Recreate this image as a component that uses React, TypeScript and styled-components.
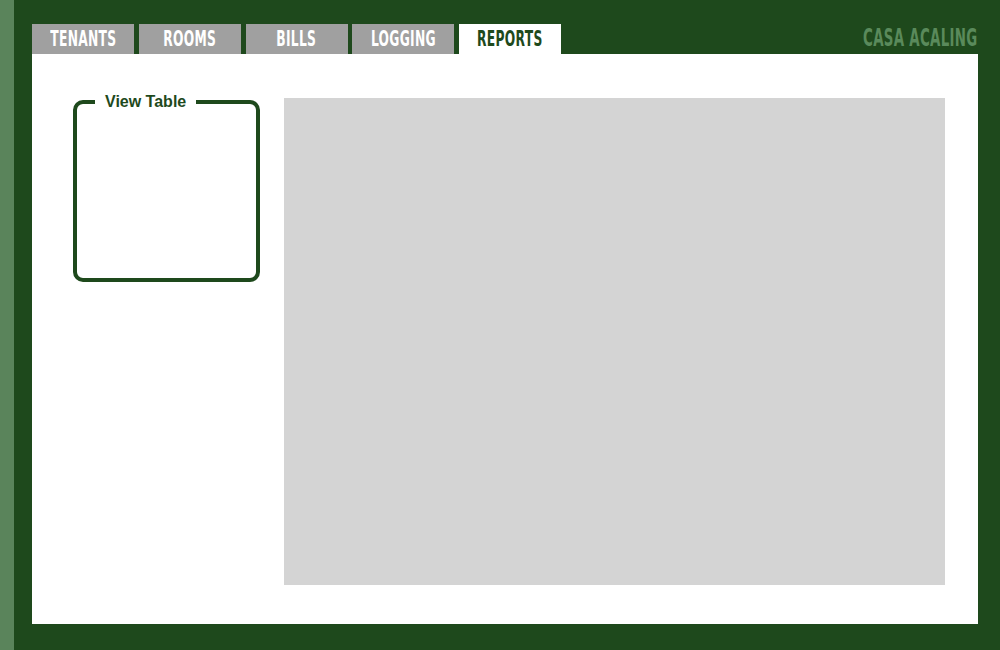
import React from "react";
import styled, { createGlobalStyle } from "styled-components";

const GlobalStyle = createGlobalStyle`
  html, body { margin: 0; padding: 0; }
  body { background: #1e491c; font-family: "Liberation Sans", Arial, sans-serif; }
`;

const Page = styled.div`
  display: flex;
  width: 1000px;
  height: 650px;
  overflow: hidden;
`;

const SideStrip = styled.div`
  width: 14px;
  flex: none;
  background: #5a845b;
`;

const Main = styled.div`
  flex: 1;
  display: flex;
  flex-direction: column;
  background: #1e491c;
  padding: 0 22px 26px 18px;
`;

const Header = styled.header`
  display: flex;
  justify-content: space-between;
  align-items: flex-start;
  height: 54px;
  padding-top: 24px;
  box-sizing: border-box;
`;

const Tabs = styled.nav`
  display: flex;
  gap: 4.75px;
`;

const Tab = styled.div<{ $active?: boolean }>`
  width: 102px;
  height: 30px;
  display: flex;
  align-items: center;
  justify-content: center;
  background: ${(p) => (p.$active ? "#ffffff" : "#a0a0a0")};
  color: ${(p) => (p.$active ? "#1e491c" : "#ffffff")};
  cursor: pointer;
`;

const CondensedLabel = styled.span<{ $size: number; $scale: number }>`
  display: inline-block;
  font-family: "DejaVu Sans Condensed", "DejaVu Sans", sans-serif;
  font-stretch: condensed;
  font-weight: bold;
  font-size: ${(p) => p.$size}px;
  line-height: 1;
  white-space: nowrap;
  transform: scaleX(${(p) => p.$scale});
  letter-spacing: 0.5px;
`;

const Brand = styled.div`
  color: #5a8a5b;
  margin-top: 1px;
  display: flex;
  justify-content: flex-end;
  width: 160px;
`;

const BrandLabel = styled(CondensedLabel)`
  transform-origin: right center;
`;

const Panel = styled.section`
  flex: 1;
  background: #ffffff;
  display: flex;
  align-items: flex-start;
  gap: 24px;
  padding: 39px 33px 39px 41px;
`;

const Fieldset = styled.fieldset`
  box-sizing: border-box;
  width: 187px;
  height: 189px;
  margin: 0;
  min-inline-size: 0;
  flex: none;
  border: 4px solid #1e491c;
  border-radius: 10px;
  padding: 0 18px;
`;

const Legend = styled.legend`
  padding: 0 10px;
  font-family: "Liberation Sans", Arial, sans-serif;
  font-weight: bold;
  font-size: 16px;
  line-height: 18px;
  color: #1e491c;
`;

const ReportArea = styled.div`
  flex: 1;
  align-self: stretch;
  margin-top: 5px;
  background: #d4d4d4;
`;

const tabs = ["TENANTS", "ROOMS", "BILLS", "LOGGING", "REPORTS"];

export default function App() {
  return (
    <>
      <GlobalStyle />
      <Page>
        <SideStrip />
        <Main>
          <Header>
            <Tabs>
              {tabs.map((t) => (
                <Tab key={t} $active={t === "REPORTS"}>
                  <CondensedLabel $size={22} $scale={0.62}>
                    {t}
                  </CondensedLabel>
                </Tab>
              ))}
            </Tabs>
            <Brand>
              <BrandLabel $size={25} $scale={0.595}>
                CASA ACALING
              </BrandLabel>
            </Brand>
          </Header>
          <Panel>
            <Fieldset>
              <Legend>View Table</Legend>
            </Fieldset>
            <ReportArea />
          </Panel>
        </Main>
      </Page>
    </>
  );
}
